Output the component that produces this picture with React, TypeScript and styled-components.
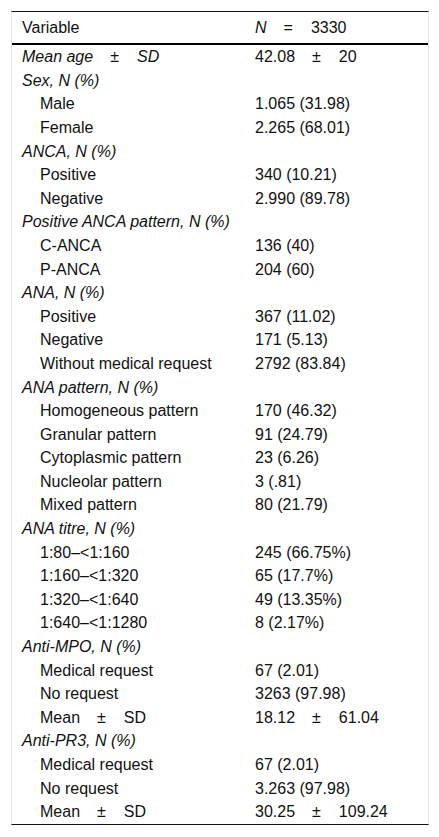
import React from "react";
import styled, { createGlobalStyle } from "styled-components";

type RowKind = "top" | "group" | "sub";

interface Row {
  kind: RowKind;
  label: React.ReactNode;
  value?: React.ReactNode;
}

const GlobalStyle = createGlobalStyle`
  html, body {
    margin: 0;
    padding: 0;
    background: #fff;
  }
  body {
    font-family: "Liberation Sans", Arial, sans-serif;
    color: #111;
  }
  * {
    box-sizing: border-box;
  }
`;

const Page = styled.div`
  padding: 11px;
`;

const Table = styled.table`
  width: 418px;
  border-collapse: separate;
  border-spacing: 0;
  border-top: 1px solid #111;
  border-bottom: 1px solid #111;
  border-left: 1px solid #e3e3e3;
  border-right: 1px solid #e3e3e3;
  font-size: 16px;
  line-height: 19.6px;
`;

const HeadCell = styled.th<{ $first?: boolean }>`
  text-align: left;
  font-weight: normal;
  padding: 6px 0 5.6px 10px;
  border-bottom: 2px solid #000;
  width: ${(p) => (p.$first ? "233px" : "auto")};
`;

const Cell = styled.td<{ $kind: RowKind; $label?: boolean }>`
  padding: 2px 0 2px ${(p) => (p.$label && p.$kind === "sub" ? "28px" : "10px")};
  font-style: ${(p) => (p.$label && p.$kind !== "sub" ? "italic" : "normal")};
  white-space: nowrap;
  vertical-align: middle;
  width: ${(p) => (p.$label ? "233px" : "auto")};
`;

const Em = styled.i`
  font-style: italic;
`;

// operator with the wide spacing used around ± and =
const Op = styled.span`
  display: inline-block;
  margin: 0 18px 0 17px;
`;

const pm = (a: string, b: string) => (
  <>
    {a}
    <Op>±</Op>
    {b}
  </>
);

const rows: Row[] = [
  { kind: "top", label: pm("Mean age", "SD"), value: pm("42.08", "20") },
  { kind: "group", label: "Sex, N (%)" },
  { kind: "sub", label: "Male", value: "1.065 (31.98)" },
  { kind: "sub", label: "Female", value: "2.265 (68.01)" },
  { kind: "group", label: "ANCA, N (%)" },
  { kind: "sub", label: "Positive", value: "340 (10.21)" },
  { kind: "sub", label: "Negative", value: "2.990 (89.78)" },
  { kind: "group", label: "Positive ANCA pattern, N (%)" },
  { kind: "sub", label: "C-ANCA", value: "136 (40)" },
  { kind: "sub", label: "P-ANCA", value: "204 (60)" },
  { kind: "group", label: "ANA, N (%)" },
  { kind: "sub", label: "Positive", value: "367 (11.02)" },
  { kind: "sub", label: "Negative", value: "171 (5.13)" },
  { kind: "sub", label: "Without medical request", value: "2792 (83.84)" },
  { kind: "group", label: "ANA pattern, N (%)" },
  { kind: "sub", label: "Homogeneous pattern", value: "170 (46.32)" },
  { kind: "sub", label: "Granular pattern", value: "91 (24.79)" },
  { kind: "sub", label: "Cytoplasmic pattern", value: "23 (6.26)" },
  { kind: "sub", label: "Nucleolar pattern", value: "3 (.81)" },
  { kind: "sub", label: "Mixed pattern", value: "80 (21.79)" },
  { kind: "group", label: "ANA titre, N (%)" },
  { kind: "sub", label: "1:80–<1:160", value: "245 (66.75%)" },
  { kind: "sub", label: "1:160–<1:320", value: "65 (17.7%)" },
  { kind: "sub", label: "1:320–<1:640", value: "49 (13.35%)" },
  { kind: "sub", label: "1:640–<1:1280", value: "8 (2.17%)" },
  { kind: "group", label: "Anti-MPO, N (%)" },
  { kind: "sub", label: "Medical request", value: "67 (2.01)" },
  { kind: "sub", label: "No request", value: "3263 (97.98)" },
  { kind: "sub", label: pm("Mean", "SD"), value: pm("18.12", "61.04") },
  { kind: "group", label: "Anti-PR3, N (%)" },
  { kind: "sub", label: "Medical request", value: "67 (2.01)" },
  { kind: "sub", label: "No request", value: "3.263 (97.98)" },
  { kind: "sub", label: pm("Mean", "SD"), value: pm("30.25", "109.24") },
];

const App: React.FC = () => {
  return (
    <Page>
      <GlobalStyle />
      <Table>
        <thead>
          <tr>
            <HeadCell $first>Variable</HeadCell>
            <HeadCell>
              <Em>N</Em>
              <Op>=</Op>3330
            </HeadCell>
          </tr>
        </thead>
        <tbody>
          {rows.map((row, i) => (
            <tr key={i}>
              <Cell $kind={row.kind} $label>
                {row.label}
              </Cell>
              <Cell $kind={row.kind}>{row.value}</Cell>
            </tr>
          ))}
        </tbody>
      </Table>
    </Page>
  );
};

export default App;
